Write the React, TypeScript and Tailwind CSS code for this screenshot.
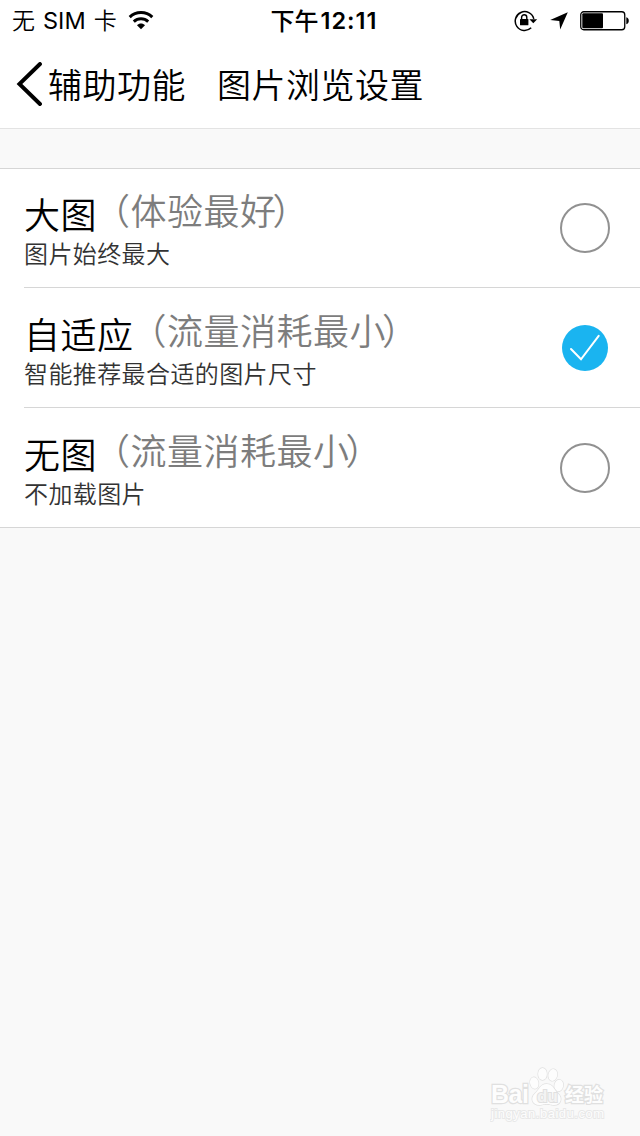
import { useState } from 'react';
import { clsx } from 'clsx';

type Option = {
  id: string;
  title: string;
  note: string;
  description: string;
};

const options: Option[] = [
  { id: 'large', title: '大图', note: '体验最好', description: '图片始终最大' },
  { id: 'auto', title: '自适应', note: '流量消耗最小', description: '智能推荐最合适的图片尺寸' },
  { id: 'none', title: '无图', note: '流量消耗最小', description: '不加载图片' },
];

function WifiIcon() {
  return (
    <svg width="26" height="20" viewBox="0 0 26 20" fill="none" stroke="#000" strokeWidth="3">
      <path d="M1.7 6.1C8 0.1 18 0.1 24.3 6.1" />
      <path d="M5.8 10.600C10 6.800 16 6.800 20.2 10.600" />
      <path d="M13 18.3L9 14.3C11.2 12 14.8 12 17 14.3Z" fill="#000" stroke="none" />
    </svg>
  );
}

function LockIcon() {
  return (
    <svg width="24" height="22" viewBox="0 0 24 22" fill="none">
      <path d="M19.8 8.9A9.4 9.4 0 1 0 17.2 17.8" stroke="#000" strokeWidth="1.5" />
      <path d="M15.4 9.2H23.2L19.3 13.2Z" fill="#000" />
      <rect x="6" y="9" width="8.4" height="6.3" rx="0.6" fill="#000" />
      <path d="M7.6 9.5V7.4A2.6 2.6 0 0 1 12.8 7.4V9.5" stroke="#000" strokeWidth="1.4" />
    </svg>
  );
}

function BatteryIcon() {
  return (
    <svg width="50" height="20" viewBox="0 0 50 20" fill="none">
      <rect x="0.75" y="0.75" width="44" height="18" rx="3" stroke="#000" strokeWidth="1.3" />
      <rect x="2.3" y="2.3" width="20.7" height="14.9" rx="1" fill="#000" />
      <path d="M46.3 6.3C49.6 6.8 49.6 12.7 46.3 13.2Z" fill="#000" />
    </svg>
  );
}

function StatusBar() {
  return (
    <div className="grid h-10 grid-cols-[1fr_auto_1fr] items-center bg-white pt-0.5 text-2xl leading-9 text-black">
      <div className="flex items-center pl-3 text-[23px]">
        <span className="-mt-1 font-['Noto_Sans_CJK_SC',sans-serif] font-[350]">无</span>
        <span className="ml-2 font-[Inter,sans-serif] text-[23.5px]">SIM</span>
        <span className="-mt-1 ml-2 font-['Noto_Sans_CJK_SC',sans-serif] font-[350]">卡</span>
        <span className="ml-[11px]">
          <WifiIcon />
        </span>
      </div>
      <span className="flex items-center pl-2 text-2xl leading-9">
        <span className="-mt-0.5 font-['Noto_Sans_CJK_SC',sans-serif] font-medium">下午</span>
        <span className="ml-0.5 font-[Inter,sans-serif] text-[23.5px] font-semibold tracking-[1px]">12:11</span>
      </span>
      <div className="flex items-center justify-end pr-2.5">
        <LockIcon />
        <svg className="ml-3" width="18" height="18" viewBox="0 0 18 18">
          <path d="M17.8 0.2L10.2 17.5L9.3 9L0.2 8Z" fill="#000" />
        </svg>
        <span className="ml-3">
          <BatteryIcon />
        </span>
      </div>
    </div>
  );
}

function NavBar() {
  return (
    <header className="flex h-[89px] items-center border-b border-[#e3e3e3] bg-white pl-4 text-[34px] leading-[48px] font-[350] tracking-[0.5px] text-black">
      <svg width="27" height="44" viewBox="0 0 27 44" fill="none" stroke="#000" strokeWidth="3.9">
        <path d="M24 2L3.4 22L24 42" strokeLinecap="round" />
      </svg>
      <span className="ml-[5px]">辅助功能</span>
      <h1 className="ml-[31px] font-[350]">图片浏览设置</h1>
    </header>
  );
}

function Radio({ checked }: { checked: boolean }) {
  if (!checked) {
    return <span className="size-[50px] rounded-full border-2 border-[#919191]" />;
  }
  return (
    <span className="mr-0.5 flex size-[46px] items-center justify-center rounded-full bg-[#1ab4f0]">
      <svg width="46" height="46" viewBox="0 0 46 46" fill="none" stroke="#fff" strokeWidth="2">
        <path d="M9 24L19 34.3L36.7 10.8" strokeLinecap="round" />
      </svg>
    </span>
  );
}

function Watermark() {
  return (
    <svg width="122" height="62" viewBox="0 0 122 62" fill="#fdfdfd" stroke="#e0e0e0" strokeWidth="1.3">
      <g fontFamily="Liberation Sans, sans-serif" fontWeight="700" paintOrder="stroke">
        <text x="1" y="37" fontSize="25" strokeWidth="2.4" textLength="38">
          Bai
        </text>
        <ellipse cx="44.3" cy="17" rx="4.2" ry="5.8" transform="rotate(-12 44.3 17)" />
        <ellipse cx="52.5" cy="8" rx="4.4" ry="6" />
        <ellipse cx="62.8" cy="9" rx="4.4" ry="6" transform="rotate(12 62.8 9)" />
        <ellipse cx="68.8" cy="19.5" rx="4.4" ry="5.8" transform="rotate(12 68.8 19.5)" />
        <path d="M56.5 18C50 18 49 24 45 27.5C40 32 42 39 49.5 39C53 39 53 38 56.5 38C60 38 60 39 64 39C71 39 73 32 68 27.5C64 24 63.5 18 56.5 18Z" />
        <text x="47" y="36" fontSize="17" fill="#f3f3f3" strokeWidth="2">
          du
        </text>
        <text x="75" y="36" fontSize="19" strokeWidth="2.4" fontFamily="Noto Sans CJK SC, sans-serif" textLength="38">
          经验
        </text>
        <text x="1" y="52" fontSize="13" strokeWidth="1.8" fontWeight="400" stroke="#e8e8e8" textLength="113">
          jingyan.baidu.com
        </text>
      </g>
    </svg>
  );
}

export default function App() {
  const [selected, setSelected] = useState('auto');

  return (
    <div className="flex h-[1136px] w-[640px] flex-col overflow-hidden bg-[#f9f9f9] font-['Noto_Sans_CJK_SC',sans-serif]">
      <StatusBar />
      <NavBar />

      <ul className="mt-[39px] border-y border-[#d6d6d6] bg-white pl-6">
        {options.map((option, index) => (
          <li
            key={option.id}
            onClick={() => setSelected(option.id)}
            className={clsx(
              'flex items-center justify-between pr-[30px]',
              index === 0 ? 'h-[118px]' : 'h-[120px] border-t border-[#d6d6d6]'
            )}
          >
            <div className="pt-0.5 font-[350] tracking-[0.5px]">
              <div className="flex items-start text-4xl leading-9">
                <span className="pt-1 leading-9 text-black">{option.title}</span>
                <span className="-ml-[3px] leading-9 text-[#7d7d7d]">
                  （{option.note}
                  <span className="-ml-1">）</span>
                </span>
              </div>
              <p className="mt-2 text-2xl leading-7 tracking-[0.4px] text-[#333333]">{option.description}</p>
            </div>
            <Radio checked={selected === option.id} />
          </li>
        ))}
      </ul>

      <div className="mt-auto flex justify-end pr-7 pb-2">
        <Watermark />
      </div>
    </div>
  );
}
